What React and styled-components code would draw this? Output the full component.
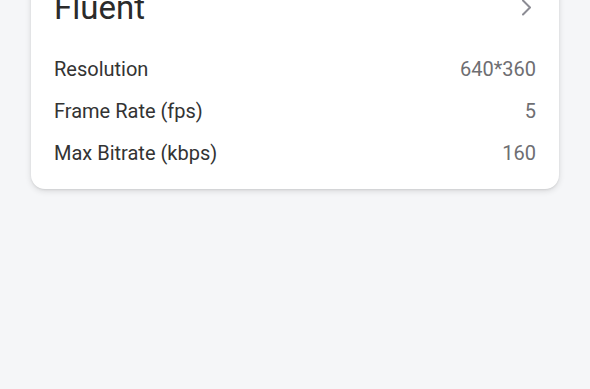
import styled, { createGlobalStyle } from "styled-components";

const GlobalStyle = createGlobalStyle`
    html, body { margin: 0; padding: 0; }
    body {
        background: #f5f6f8;
        font-family: Roboto, "Noto Sans", "Liberation Sans", sans-serif;
        overflow: hidden;
    }
`;

// 페이지 (위로 스크롤된 상태)
const Page = styled.div`
    width: 590px;
    height: 389px;
    padding: 0 31px;
    box-sizing: border-box;
`;

const Card = styled.div`
    margin-top: -32px;
    background: #ffffff;
    border-radius: 14px;
    box-shadow: 0 2px 6px rgba(0, 0, 0, 0.12), 0 1px 2px rgba(0, 0, 0, 0.08);
    padding: 16px 23px 15px 23px;
`;

const TitleRow = styled.div`
    display: flex;
    justify-content: space-between;
    align-items: center;
    height: 48px;
    margin-bottom: 16px;
`;

const Title = styled.span`
    font-size: 33px;
    line-height: 48px;
    color: #2b2b2b;
`;

const Chevron = styled.svg`
    width: 14px;
    height: 22px;
    margin-right: 2px;
    margin-top: -1px;
`;

const Row = styled.div`
    display: flex;
    justify-content: space-between;
    align-items: center;
    height: 42px;
    font-size: 20px;
    line-height: 42px;
`;

const Label = styled.span`
    color: #333333;
`;

const Value = styled.span`
    color: #6e6e72;
`;

const ROWS = [
    { label: "Resolution", value: "640*360" },
    { label: "Frame Rate (fps)", value: "5" },
    { label: "Max Bitrate (kbps)", value: "160" },
];

export default function App() {
    return (
        <>
            <GlobalStyle />
            <Page>
                <Card>
                    <TitleRow>
                        <Title>Fluent</Title>
                        <Chevron viewBox="0 0 14 22">
                            <path d="M3 3.5 L10 10.5 L3 17.5" fill="none" stroke="#8c8c94" strokeWidth="2" strokeLinecap="round" strokeLinejoin="round" />
                        </Chevron>
                    </TitleRow>
                    {ROWS.map((r) => (
                        <Row key={r.label}>
                            <Label>{r.label}</Label>
                            <Value>{r.value}</Value>
                        </Row>
                    ))}
                </Card>
            </Page>
        </>
    );
}
